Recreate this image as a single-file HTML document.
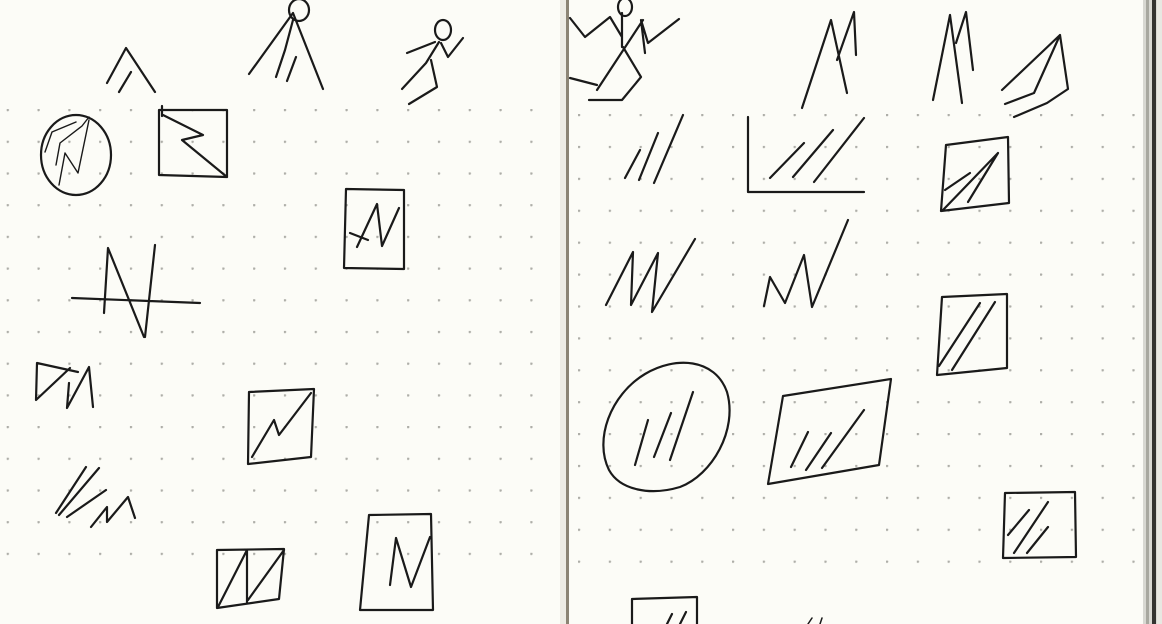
<!DOCTYPE html>
<html><head><meta charset="utf-8"><style>
html,body{margin:0;padding:0;background:#fcfcf7;}
svg{display:block}
</style></head><body>
<svg width="1162" height="624" viewBox="0 0 1162 624" xmlns="http://www.w3.org/2000/svg">
<defs>
<pattern id="dl" x="6.7" y="109" width="30.8" height="31.7" patternUnits="userSpaceOnUse">
<circle cx="1" cy="1" r="1.3" fill="#aeaea8"/></pattern>
<pattern id="dr" x="578" y="114" width="30.8" height="31.9" patternUnits="userSpaceOnUse">
<circle cx="1" cy="1" r="1.3" fill="#aeaea8"/></pattern>
</defs>
<rect width="1162" height="624" fill="#fcfcf7"/>
<rect x="0" y="104" width="562" height="460" fill="url(#dl)"/>
<rect x="572" y="109" width="570" height="456" fill="url(#dr)"/>
<rect x="560" y="0" width="6" height="624" fill="#eeece4"/>
<rect x="566" y="0" width="3" height="624" fill="#8c8474"/>
<rect x="1143" y="0" width="19" height="624" fill="#d8d8d2"/>
<rect x="1146" y="0" width="3" height="624" fill="#a8a8a0"/>
<rect x="1152" y="0" width="4" height="624" fill="#333330"/>
<rect x="1157" y="0" width="5" height="624" fill="#e8e8e2"/>

<g fill="none" stroke="#1a1a1a" stroke-width="2.2" stroke-linecap="round" stroke-linejoin="round">
<path d="M107 83 L126 48 L155 92 M119 92 L131 72"/>
<ellipse cx="299" cy="10" rx="10" ry="11"/>
<path d="M293 13 L249 74 M293 13 L323 89 M293 20 L285 50 L276 77 M296 57 L287 81"/>
<ellipse cx="443" cy="30" rx="8" ry="10"/>
<path d="M439 42 L426 63 L402 89 M407 53 L435 42 M441 43 L448 57 L463 38 M431 60 L437 87 L409 104"/>
<ellipse cx="76" cy="155" rx="35" ry="40"/>
<path d="M45 152 L52 132 L76 122 M59 185 L65 153 L78 173 L89 120 M56 165 L60 143 L82 126 L89 117" stroke-width="1.4"/>
<path d="M159 110 L227 110 L227 177 L159 175 Z M163 115 L203 135 L182 140 L227 177 M162 106 L162 116"/>
<path d="M346 189 L404 190 L404 269 L344 268 Z M357 247 L377 204 L382 246 L399 208 M350 233 L368 240"/>
<path d="M72 298 L200 303 M104 313 L108 248 L144 337 M155 245 L145 337"/>
<path d="M37 363 L78 372 M37 363 L36 400 L70 368 M69 383 L67 408 L89 367 L93 407"/>
<path d="M56 513 L86 467 M59 515 L99 468 M67 517 L106 490 M91 527 L107 507 L107 522 L128 497 L135 518"/>
<path d="M249 392 L314 389 L311 457 L248 464 Z M252 457 L274 420 L279 435 L311 393"/>
<path d="M217 550 L284 549 L279 599 L217 608 Z M247 550 L247 603 M218 607 L247 550 M248 600 L284 550"/>
<path d="M369 515 L431 514 L433 610 L360 610 Z M390 585 L396 538 M396 538 L411 587 L430 537"/>
<ellipse cx="625" cy="7" rx="7" ry="9"/>
<path d="M622 13 L622 47 M679 19 L648 43 L641 20 L645 53 M570 18 L585 37 L610 17 L622 37 M643 20 L597 90 M623 47 L641 77 L622 100 L589 100 M570 78 L597 85"/>
<path d="M802 108 L831 20 L847 93 M837 60 L854 12 L856 55"/>
<path d="M933 100 L950 15 L962 103 M956 43 L966 12 L973 70"/>
<path d="M1060 35 L1002 90 M1060 35 L1034 93 L1005 104 M1060 35 L1068 89 L1047 103 L1014 117"/>
<path d="M625 178 L640 150 M639 180 L658 133 M654 183 L683 115"/>
<path d="M748 117 L748 192 L864 192 M770 178 L804 143 M793 177 L833 130 M814 182 L864 118"/>
<path d="M946 145 L1008 137 L1009 203 L941 211 Z M943 210 L998 153 M945 190 L970 173 M968 202 L998 153"/>
<path d="M606 305 L633 252 L631 305 L658 253 L652 312 L695 239"/>
<path d="M764 306 L770 277 L785 303 L804 255 L812 307 L848 220"/>
<path d="M942 297 L1007 294 L1007 368 L937 375 Z M939 366 L980 303 M952 370 L995 302"/>
<path d="M609 470 C594 440 610 395 645 374 C675 356 715 358 727 392 C738 430 712 475 680 487 C650 496 620 490 609 470 Z"/>
<path d="M635 465 L648 420 M654 457 L671 413 M670 460 L693 392"/>
<path d="M783 396 L891 379 L879 465 L768 484 Z M791 467 L808 432 M806 470 L831 433 M822 468 L864 410"/>
<path d="M1005 493 L1075 492 L1076 557 L1003 558 Z M1008 535 L1029 510 M1014 553 L1048 502 M1027 553 L1048 527"/>
<path d="M632 624 L632 599 L697 597 L697 624 M667 624 L672 614 M680 624 L686 612"/>
<path d="M808 624 L812 618 M820 624 L822 618" stroke-width="1.5"/>
</g>
</svg>
</body></html>
